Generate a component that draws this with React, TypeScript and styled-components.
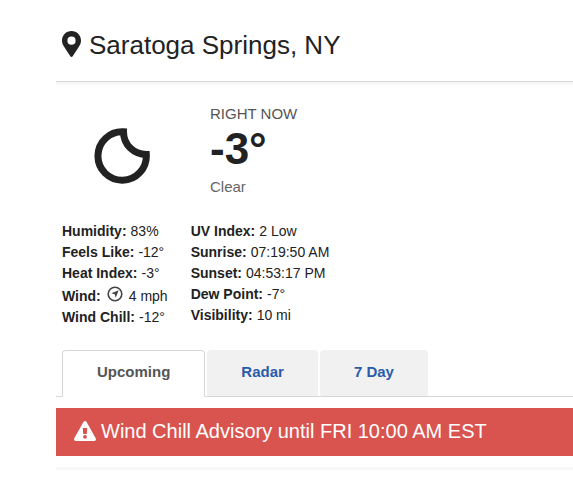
import React, { useState } from "react";
import styled, { createGlobalStyle } from "styled-components";

const GlobalStyle = createGlobalStyle`
  * { box-sizing: border-box; }
  body {
    margin: 0;
    background: #fff;
    color: #222;
    font-family: "Liberation Sans", Arial, sans-serif;
  }
`;

const Page = styled.main`
  padding: 20px 0 0 56px;
`;

const Header = styled.header`
  display: flex;
  align-items: center;
  gap: 8px;
  height: 62px;
  padding: 0 6px 13px;
  border-bottom: 1px solid #d6d6d6;
  box-shadow: 0 3px 0 #f8f8f8;
`;

const Location = styled.h1`
  margin: 0;
  padding-top: 2px;
  font-size: 26px;
  font-weight: 400;
  line-height: 32px;
`;

const Current = styled.section`
  display: flex;
  align-items: flex-end;
  gap: 60px;
  padding: 22px 6px 0 38px;
`;

const MoonIcon = styled.svg`
  margin-bottom: 13px;
`;

const Summary = styled.div`
  display: flex;
  flex-direction: column;
`;

const Caption = styled.span<{ $tone: string }>`
  color: ${(p) => p.$tone};
  font-size: 15px;
  line-height: 20px;
`;

const Temperature = styled.strong`
  padding-bottom: 3px;
  font-size: 44px;
  line-height: 50px;
`;

const Details = styled.section`
  display: flex;
  gap: 23px;
  padding: 24px 6px 0;
`;

const DetailList = styled.dl`
  margin: 0;
`;

const Detail = styled.div<{ $tall?: boolean }>`
  display: flex;
  align-items: ${(p) => (p.$tall ? "flex-end" : "center")};
  gap: 4px;
  height: ${(p) => (p.$tall ? 23 : 21)}px;
  font-size: 14px;
  line-height: 21px;
  white-space: nowrap;
`;

const Term = styled.dt`
  font-weight: 700;
`;

const Value = styled.dd`
  display: flex;
  gap: 6px;
  margin: 0;
`;

const WindIcon = styled.svg`
  margin-left: 2px;
`;

const Tabs = styled.div`
  display: flex;
  gap: 2px;
  margin-top: 22px;
  padding: 0 6px;
  box-shadow: inset 0 -1px 0 #d6d6d6;
`;

const Tab = styled.button<{ $active: boolean }>`
  height: 47px;
  padding: 0 ${(p) => (p.$active ? 34 : 33)}px 4px;
  border: 1px solid ${(p) => (p.$active ? "#d6d6d6" : "#f1f1f1")};
  border-bottom-color: ${(p) => (p.$active ? "#fff" : "#d6d6d6")};
  border-radius: 4px 4px 0 0;
  background: ${(p) => (p.$active ? "#fff" : "#f1f1f1")};
  color: ${(p) => (p.$active ? "#555" : "#2a5caa")};
  font: 700 15px "Liberation Sans", Arial, sans-serif;
  white-space: nowrap;
  cursor: pointer;
`;

const Alert = styled.div`
  display: flex;
  align-items: center;
  gap: 5px;
  min-height: 48px;
  margin-top: 11px;
  padding: 0 18px 2px;
  background: #d9534f;
  color: #fff;
  font-size: 20px;
  line-height: 24px;
`;

const Divider = styled.hr`
  height: 3px;
  margin: 11px 0 0;
  border: 0;
  background: #f7f7f7;
`;

const left = [
  ["Humidity:", "83%"],
  ["Feels Like:", "-12°"],
  ["Heat Index:", "-3°"],
  ["Wind:", "4 mph"],
  ["Wind Chill:", "-12°"],
];

const right = [
  ["UV Index:", "2 Low"],
  ["Sunrise:", "07:19:50 AM"],
  ["Sunset:", "04:53:17 PM"],
  ["Dew Point:", "-7°"],
  ["Visibility:", "10 mi"],
];

const tabs = ["Upcoming", "Radar", "7 Day"];

function Pin() {
  return (
    <svg width="19" height="26" viewBox="0 0 19 26" aria-hidden="true">
      <path
        fill="#222"
        fillRule="evenodd"
        d="M9.500 0C4.200 0 0 4.200 0 9.500c0 3 1 4.600 2.600 7L8.300 25.300c.6.900 1.800.9 2.400 0l5.700-8.800c1.600-2.400 2.600-4 2.600-7C19 4.200 14.800 0 9.500 0Zm0 5.600a4.100 4.100 0 1 1 0 8.200a4.100 4.100 0 0 1 0-8.200Z"
      />
    </svg>
  );
}

function Moon() {
  return (
    <MoonIcon width="56" height="56" viewBox="0 0 56 56" role="img" aria-label="Clear night">
      <path
        fill="none"
        stroke="#222"
        strokeWidth="7"
        d="M29.500 3.800A24.200 24.200 0 1 0 52.300 26.500C40 26.500 29.500 17 29.500 3.800Z"
      />
    </MoonIcon>
  );
}

function WindDirection() {
  return (
    <WindIcon width="16" height="16" viewBox="0 0 16 16" role="img" aria-label="North-east">
      <circle cx="8" cy="8" r="6.800" fill="none" stroke="#444" strokeWidth="1.600" />
      <path fill="#444" d="M11.700 4.300 8.700 11.700 7.700 8.300 4.300 7.300Z" />
    </WindIcon>
  );
}

function Warning() {
  return (
    <svg width="22" height="20" viewBox="0 0 22 20" aria-hidden="true">
      <path
        fill="#fff"
        fillRule="evenodd"
        d="M9.400 1c.7-1.300 2.500-1.300 3.200 0l9.100 16.200c.7 1.300-.1 2.800-1.600 2.800H1.900C.4 20-.4 18.500.3 17.200ZM8.800 7l.4 6h3.600L13.200 7Zm2.200 6.900a1.900 1.900 0 1 0 0 3.800a1.900 1.900 0 0 0 0-3.800Z"
      />
    </svg>
  );
}

function Readings({ items }: { items: string[][] }) {
  return (
    <DetailList>
      {items.map(([term, value]) => (
        <Detail key={term} $tall={term === "Wind:"}>
          <Term>{term}</Term>
          <Value>
            {term === "Wind:" && <WindDirection />}
            {value}
          </Value>
        </Detail>
      ))}
    </DetailList>
  );
}

export default function App() {
  const [active, setActive] = useState("Upcoming");
  return (
    <>
      <GlobalStyle />
      <Page>
        <Header>
          <Pin />
          <Location>Saratoga Springs, NY</Location>
        </Header>
        <Current>
          <Moon />
          <Summary>
            <Caption $tone="#555">RIGHT NOW</Caption>
            <Temperature>-3°</Temperature>
            <Caption $tone="#666">Clear</Caption>
          </Summary>
        </Current>
        <Details>
          <Readings items={left} />
          <Readings items={right} />
        </Details>
        <Tabs role="tablist">
          {tabs.map((name) => (
            <Tab
              key={name}
              type="button"
              role="tab"
              aria-selected={active === name}
              $active={active === name}
              onClick={() => setActive(name)}
            >
              {name}
            </Tab>
          ))}
        </Tabs>
        <Alert role="alert">
          <Warning />
          <span>Wind Chill Advisory until FRI 10:00 AM EST</span>
        </Alert>
        <Divider />
      </Page>
    </>
  );
}
